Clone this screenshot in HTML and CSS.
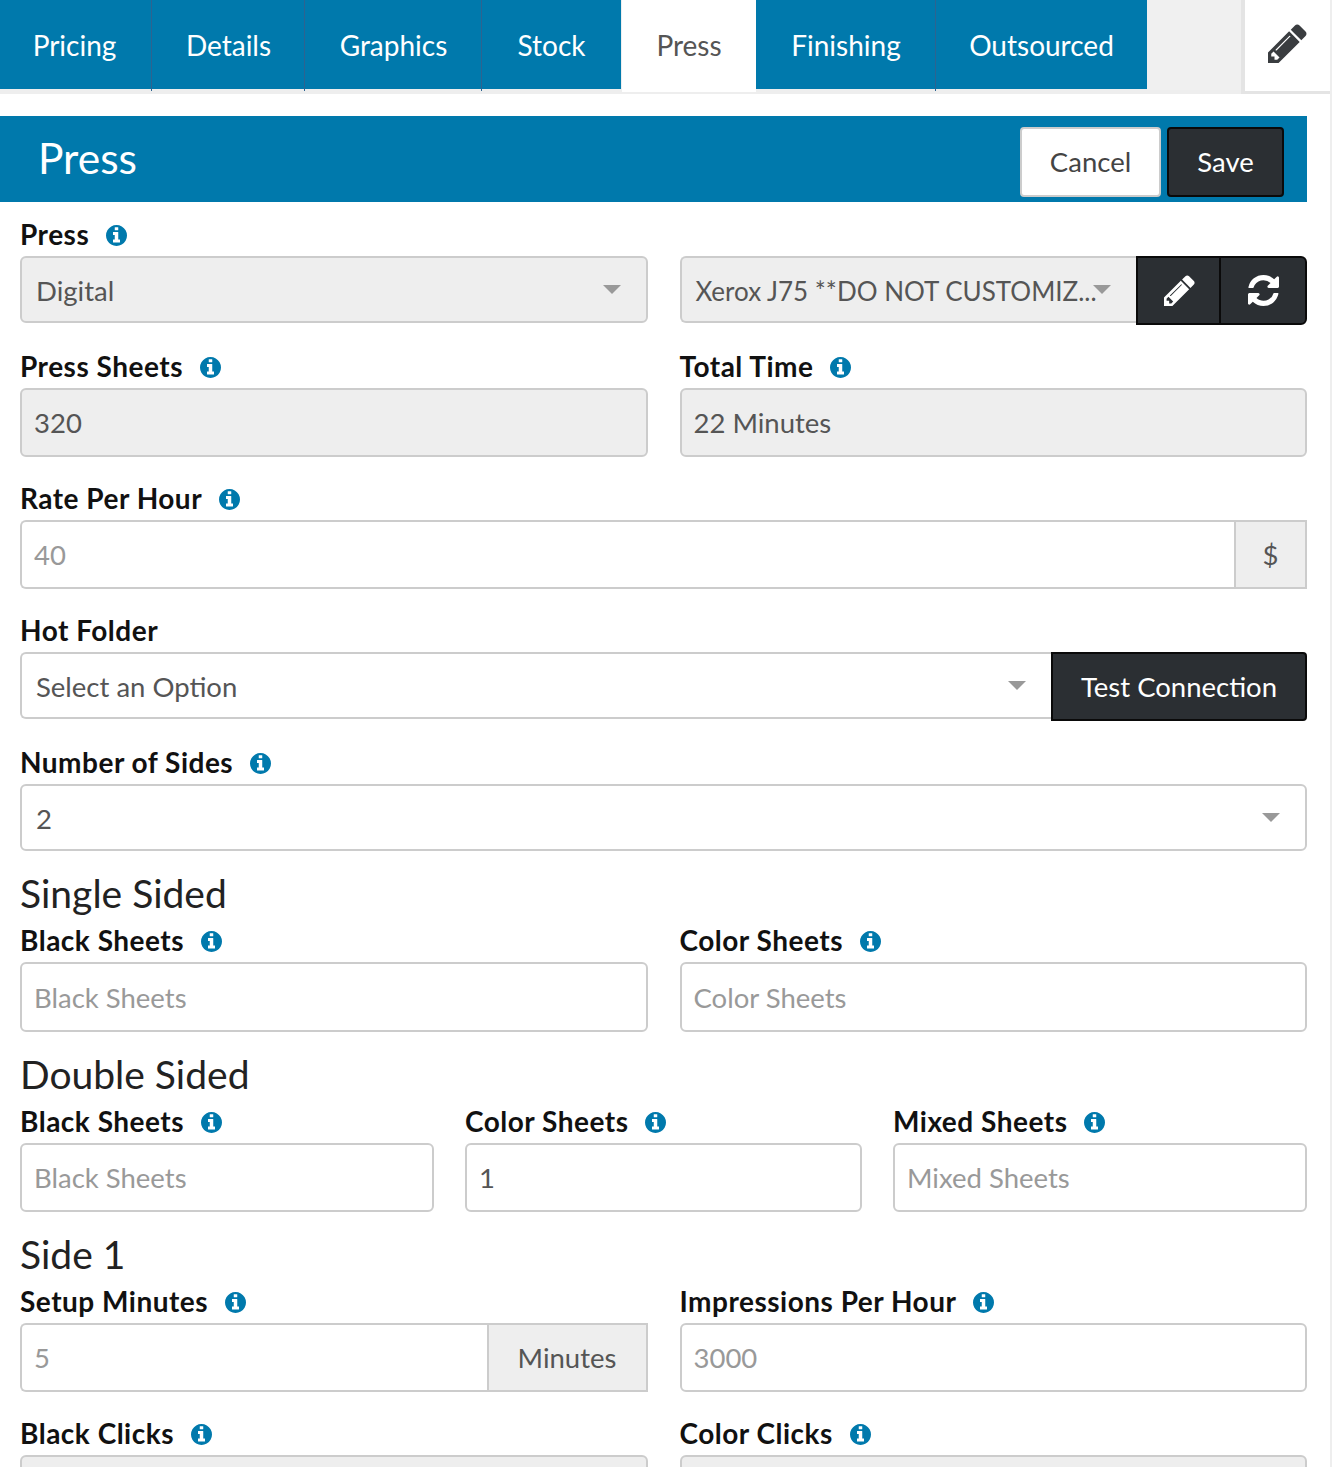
FILE: index.html
```html
<!DOCTYPE html>
<html>
	<head>
		<meta charset="utf-8">
		<title>Press</title>
		<link rel="stylesheet" href="styles.css">
	</head>
	<body>
		<svg class="icon-defs" xmlns="http://www.w3.org/2000/svg">
			<symbol id="i-info" viewBox="128 128 1536 1536"><path d="M1152 1376v-160q0-14-9-23t-23-9h-96v-512q0-14-9-23t-23-9h-320q-14 0-23 9t-9 23v160q0 14 9 23t23 9h96v320h-96q-14 0-23 9t-9 23v160q0 14 9 23t23 9h448q14 0 23-9t9-23zm-128-896v-160q0-14-9-23t-23-9h-192q-14 0-23 9t-9 23v160q0 14 9 23t23 9h192q14 0 23-9t9-23zm640 416q0 209-103 385.5t-279.5 279.5-385.5 103-385.5-103-279.5-279.5-103-385.5 103-385.5 279.5-279.5 385.5-103 385.5 103 279.5 279.5 103 385.5z"/></symbol>
			<symbol id="i-pencil" viewBox="128 128 1536 1536"><path d="M491 1536l91-91-235-235-91 91v107h128v128h107zm523-928q0-22-22-22-10 0-17 7l-542 542q-7 7-7 17 0 22 22 22 10 0 17-7l542-542q7-7 7-17zm-54-192l416 416-832 832h-416v-416zm683 96q0 53-37 90l-166 166-416-416 166-165q36-38 90-38 53 0 91 38l235 234q37 39 37 91z"/></symbol>
			<symbol id="i-refresh" viewBox="128 128 1536 1536"><path d="M1639 1056q0 5-1 7-64 268-268 434.5t-478 166.5q-146 0-282.5-55t-243.5-157l-129 129q-19 19-45 19t-45-19-19-45v-448q0-26 19-45t45-19h448q26 0 45 19t19 45-19 45l-137 137q71 66 161 102t187 36q134 0 250-65t186-179q11-17 53-117 8-23 30-23h192q13 0 22.5 9.5t9.5 22.5zm25-800v448q0 26-19 45t-45 19h-448q-26 0-45-19t-19-45 19-45l138-138q-148-137-349-137-134 0-250 65t-186 179q-11 17-53 117-8 23-30 23h-199q-13 0-22.5-9.5t-9.5-22.5v-7q65-268 270-434.5t480-166.5q146 0 284 55.5t245 156.5l130-129q19-19 45-19t45 19 19 45z"/></symbol>
		</svg>

		<div class="page">
			<div class="top">
				<nav class="tabs">
					<a class="tab tab-split tab-first">Pricing</a>
					<a class="tab tab-split">Details</a>
					<a class="tab tab-split">Graphics</a>
					<a class="tab">Stock</a>
					<a class="tab tab-active">Press</a>
					<a class="tab tab-split">Finishing</a>
					<a class="tab">Outsourced</a>
				</nav>
				<div class="top-spacer"></div>
				<div class="top-edit"><svg class="top-edit-icon"><use href="#i-pencil"/></svg></div>
			</div>

			<div class="panel">
				<header class="panel-head">
					<h2>Press</h2>
					<div class="panel-actions">
						<button class="btn btn-light">Cancel</button>
						<button class="btn btn-dark">Save</button>
					</div>
				</header>

				<form class="form">
					<div class="row row-2">
						<div class="field">
							<label>Press <svg class="info"><use href="#i-info"/></svg></label>
							<div class="control">
								<div class="select is-disabled"><span>Digital</span><i class="caret"></i></div>
							</div>
						</div>
						<div class="field">
							<label class="label-blank"></label>
							<div class="control">
								<div class="select is-disabled select-joined"><span class="select-long">Xerox J75 **DO NOT CUSTOMIZ...</span><i class="caret caret-over"></i></div>
								<button class="btn btn-dark btn-icon btn-mid"><svg class="btn-svg"><use href="#i-pencil"/></svg></button>
								<button class="btn btn-dark btn-icon btn-end"><svg class="btn-svg"><use href="#i-refresh"/></svg></button>
							</div>
						</div>
					</div>

					<div class="row row-2">
						<div class="field">
							<label>Press Sheets <svg class="info"><use href="#i-info"/></svg></label>
							<div class="control"><div class="input is-disabled">320</div></div>
						</div>
						<div class="field">
							<label>Total Time <svg class="info"><use href="#i-info"/></svg></label>
							<div class="control"><div class="input is-disabled">22 Minutes</div></div>
						</div>
					</div>

					<div class="row">
						<div class="field">
							<label>Rate Per Hour <svg class="info"><use href="#i-info"/></svg></label>
							<div class="control">
								<div class="input input-joined is-placeholder">40</div>
								<div class="addon addon-small">$</div>
							</div>
						</div>
					</div>

					<div class="row">
						<div class="field">
							<label>Hot Folder</label>
							<div class="control">
								<div class="select select-joined"><span>Select an Option</span><i class="caret"></i></div>
								<button class="btn btn-dark btn-test">Test Connection</button>
							</div>
						</div>
					</div>

					<div class="row row-tight">
						<div class="field">
							<label>Number of Sides <svg class="info"><use href="#i-info"/></svg></label>
							<div class="control"><div class="select"><span>2</span><i class="caret"></i></div></div>
						</div>
					</div>

					<h3>Single Sided</h3>
					<div class="row row-2 row-wide">
						<div class="field">
							<label>Black Sheets <svg class="info"><use href="#i-info"/></svg></label>
							<div class="control"><div class="input is-placeholder">Black Sheets</div></div>
						</div>
						<div class="field">
							<label>Color Sheets <svg class="info"><use href="#i-info"/></svg></label>
							<div class="control"><div class="input is-placeholder">Color Sheets</div></div>
						</div>
					</div>

					<h3>Double Sided</h3>
					<div class="row row-3 row-mid">
						<div class="field">
							<label>Black Sheets <svg class="info"><use href="#i-info"/></svg></label>
							<div class="control"><div class="input is-placeholder">Black Sheets</div></div>
						</div>
						<div class="field">
							<label>Color Sheets <svg class="info"><use href="#i-info"/></svg></label>
							<div class="control"><div class="input">1</div></div>
						</div>
						<div class="field">
							<label>Mixed Sheets <svg class="info"><use href="#i-info"/></svg></label>
							<div class="control"><div class="input is-placeholder">Mixed Sheets</div></div>
						</div>
					</div>

					<h3>Side 1</h3>
					<div class="row row-2">
						<div class="field">
							<label>Setup Minutes <svg class="info"><use href="#i-info"/></svg></label>
							<div class="control">
								<div class="input input-joined is-placeholder">5</div>
								<div class="addon">Minutes</div>
							</div>
						</div>
						<div class="field">
							<label>Impressions Per Hour <svg class="info"><use href="#i-info"/></svg></label>
							<div class="control"><div class="input is-placeholder">3000</div></div>
						</div>
					</div>

					<div class="row row-2">
						<div class="field">
							<label>Black Clicks <svg class="info"><use href="#i-info"/></svg></label>
							<div class="control"><div class="input is-disabled"></div></div>
						</div>
						<div class="field">
							<label>Color Clicks <svg class="info"><use href="#i-info"/></svg></label>
							<div class="control"><div class="input is-disabled"></div></div>
						</div>
					</div>
				</form>
			</div>
		</div>
	</body>
</html>
```

FILE: styles.css
```css
html, body {
	margin: 0;
	height: 100%;
	overflow: hidden;
}
body {
	background: #fff;
	color: #555;
	font-family: "Lato", "Noto Sans", sans-serif;
	font-size: 27.5px;
}
.icon-defs {
	display: none;
}
.page {
	width: 1330px;
	height: 100%;
	border-right: 2px solid #eee;
	overflow: hidden;
}

/* top tabs */
.top {
	display: flex;
	height: 94px;
}
.tabs {
	display: grid;
	grid-template-columns: 152px 153px 177px 139px 135px 180px 211px;
	grid-template-rows: 89px;
	width: 1147px;
	height: 94px;
	border-bottom: 5px solid #eee;
	box-sizing: border-box;
	font-size: 28px;
}
.tab {
	position: relative;
	display: flex;
	align-items: center;
	justify-content: center;
	background: #0079ac;
	color: #fff;
}
.tab-first {
	padding-right: 3px;
}
.tab-split::after {
	content: "";
	position: absolute;
	top: 0;
	right: 0;
	bottom: -2px;
	width: 1px;
	background: #2d6390;
}
.tab-active {
	height: 92px;
	background: #fff;
	color: #555;
	border-left: 1px solid #eee;
	padding-bottom: 3px;
	box-sizing: border-box;
}
.top-spacer {
	width: 94px;
	background: #f0f0f0;
	border-bottom: 4px solid #eee;
}
.top-edit {
	flex: 1;
	display: flex;
	align-items: center;
	justify-content: center;
	padding-bottom: 4px;
	border-left: 4px solid #e4e4e4;
	border-bottom: 3px solid #e4e4e4;
}
.top-edit-icon {
	width: 39px;
	height: 39px;
	fill: #3a3d40;
}

/* panel */
.panel {
	width: 1307px;
	margin-top: 22px;
}
.panel-head {
	display: flex;
	align-items: center;
	justify-content: space-between;
	height: 86px;
	padding: 0 23px 0 38px;
	background: #0079ac;
	color: #fff;
}
.panel-head h2 {
	margin: 0 0 4px;
	font-size: 42.5px;
	font-weight: 400;
}
.panel-actions {
	display: flex;
	gap: 6px;
	margin-top: 5px;
}

.btn {
	display: flex;
	align-items: center;
	justify-content: center;
	box-sizing: border-box;
	height: 70px;
	padding: 0;
	border-radius: 4px;
	font: inherit;
}
.btn-light {
	width: 141px;
	background: #fff;
	border: 2px solid #ccc;
	color: #444;
}
.btn-dark {
	background: #2b2f33;
	border: 2px solid #0a0a0a;
	color: #fff;
}
.panel-actions .btn-dark {
	width: 117px;
}
.btn-icon {
	height: 69px;
	flex: none;
}
.btn-mid {
	width: 84px;
	border-radius: 0;
	border-right-width: 1px;
	padding-left: 2px;
}
.btn-end {
	width: 87px;
	border-radius: 0 6px 6px 0;
	border-left-width: 1px;
}
.btn-svg {
	width: 31px;
	height: 31px;
	fill: #fff;
}
.btn-test {
	width: 256px;
	height: 69px;
	flex: none;
	border-radius: 0 4px 4px 0;
}

/* form */
.form {
	padding: 17px 0 0 20px;
}
.row {
	margin-bottom: 26px;
}
.row-tight {
	margin-bottom: 21px;
}
.row-wide {
	margin-bottom: 23px;
}
.row-mid {
	margin-bottom: 23px;
}
.row-2 {
	display: grid;
	grid-template-columns: 1fr 1fr;
	gap: 32px;
}
.row-3 {
	display: grid;
	grid-template-columns: 414px 397px 1fr;
	gap: 31px;
}
label {
	display: flex;
	align-items: center;
	gap: 17px;
	height: 32px;
	margin-bottom: 5px;
	padding-bottom: 2px;
	box-sizing: border-box;
	color: #111;
	font-size: 28px;
	font-weight: 700;
	letter-spacing: .5px;
}
.info {
	flex: none;
	width: 21px;
	height: 21px;
	margin-top: 2px;
	fill: #0079ac;
}
.control {
	display: flex;
	height: 69px;
}
.row-wide .control, .row-wide .input {
	height: 70px;
}
.input, .select {
	flex: 1;
	min-width: 0;
	display: flex;
	align-items: center;
	box-sizing: border-box;
	border: 2px solid #ccc;
	border-radius: 6px;
	background: #fff;
}
.input {
	height: 69px;
	padding: 0 12px;
	color: #555;
}
.select {
	height: 67px;
	padding: 2px 25px 0 14px;
	justify-content: space-between;
}
.select-long {
	font-size: 26px;
	white-space: nowrap;
}
.is-disabled {
	background: #eee;
}
.is-placeholder {
	color: #999;
}
.input-joined, .select-joined {
	border-right: 0;
	border-radius: 6px 0 0 6px;
}
.addon {
	display: flex;
	align-items: center;
	justify-content: center;
	box-sizing: border-box;
	width: 161px;
	background: #eee;
	border: 2px solid #ccc;
}
.addon-small {
	width: 73px;
}
.caret {
	flex: none;
	width: 0;
	height: 0;
	margin-top: -2px;
	border-left: 9px solid transparent;
	border-right: 9px solid transparent;
	border-top: 9px solid #999;
}
.caret-over {
	margin-left: -12px;
}
h3 {
	display: flex;
	align-items: center;
	height: 40px;
	margin: 0 0 11px;
	padding-bottom: 3px;
	box-sizing: border-box;
	color: #222;
	font-size: 39px;
	font-weight: 400;
}
```
